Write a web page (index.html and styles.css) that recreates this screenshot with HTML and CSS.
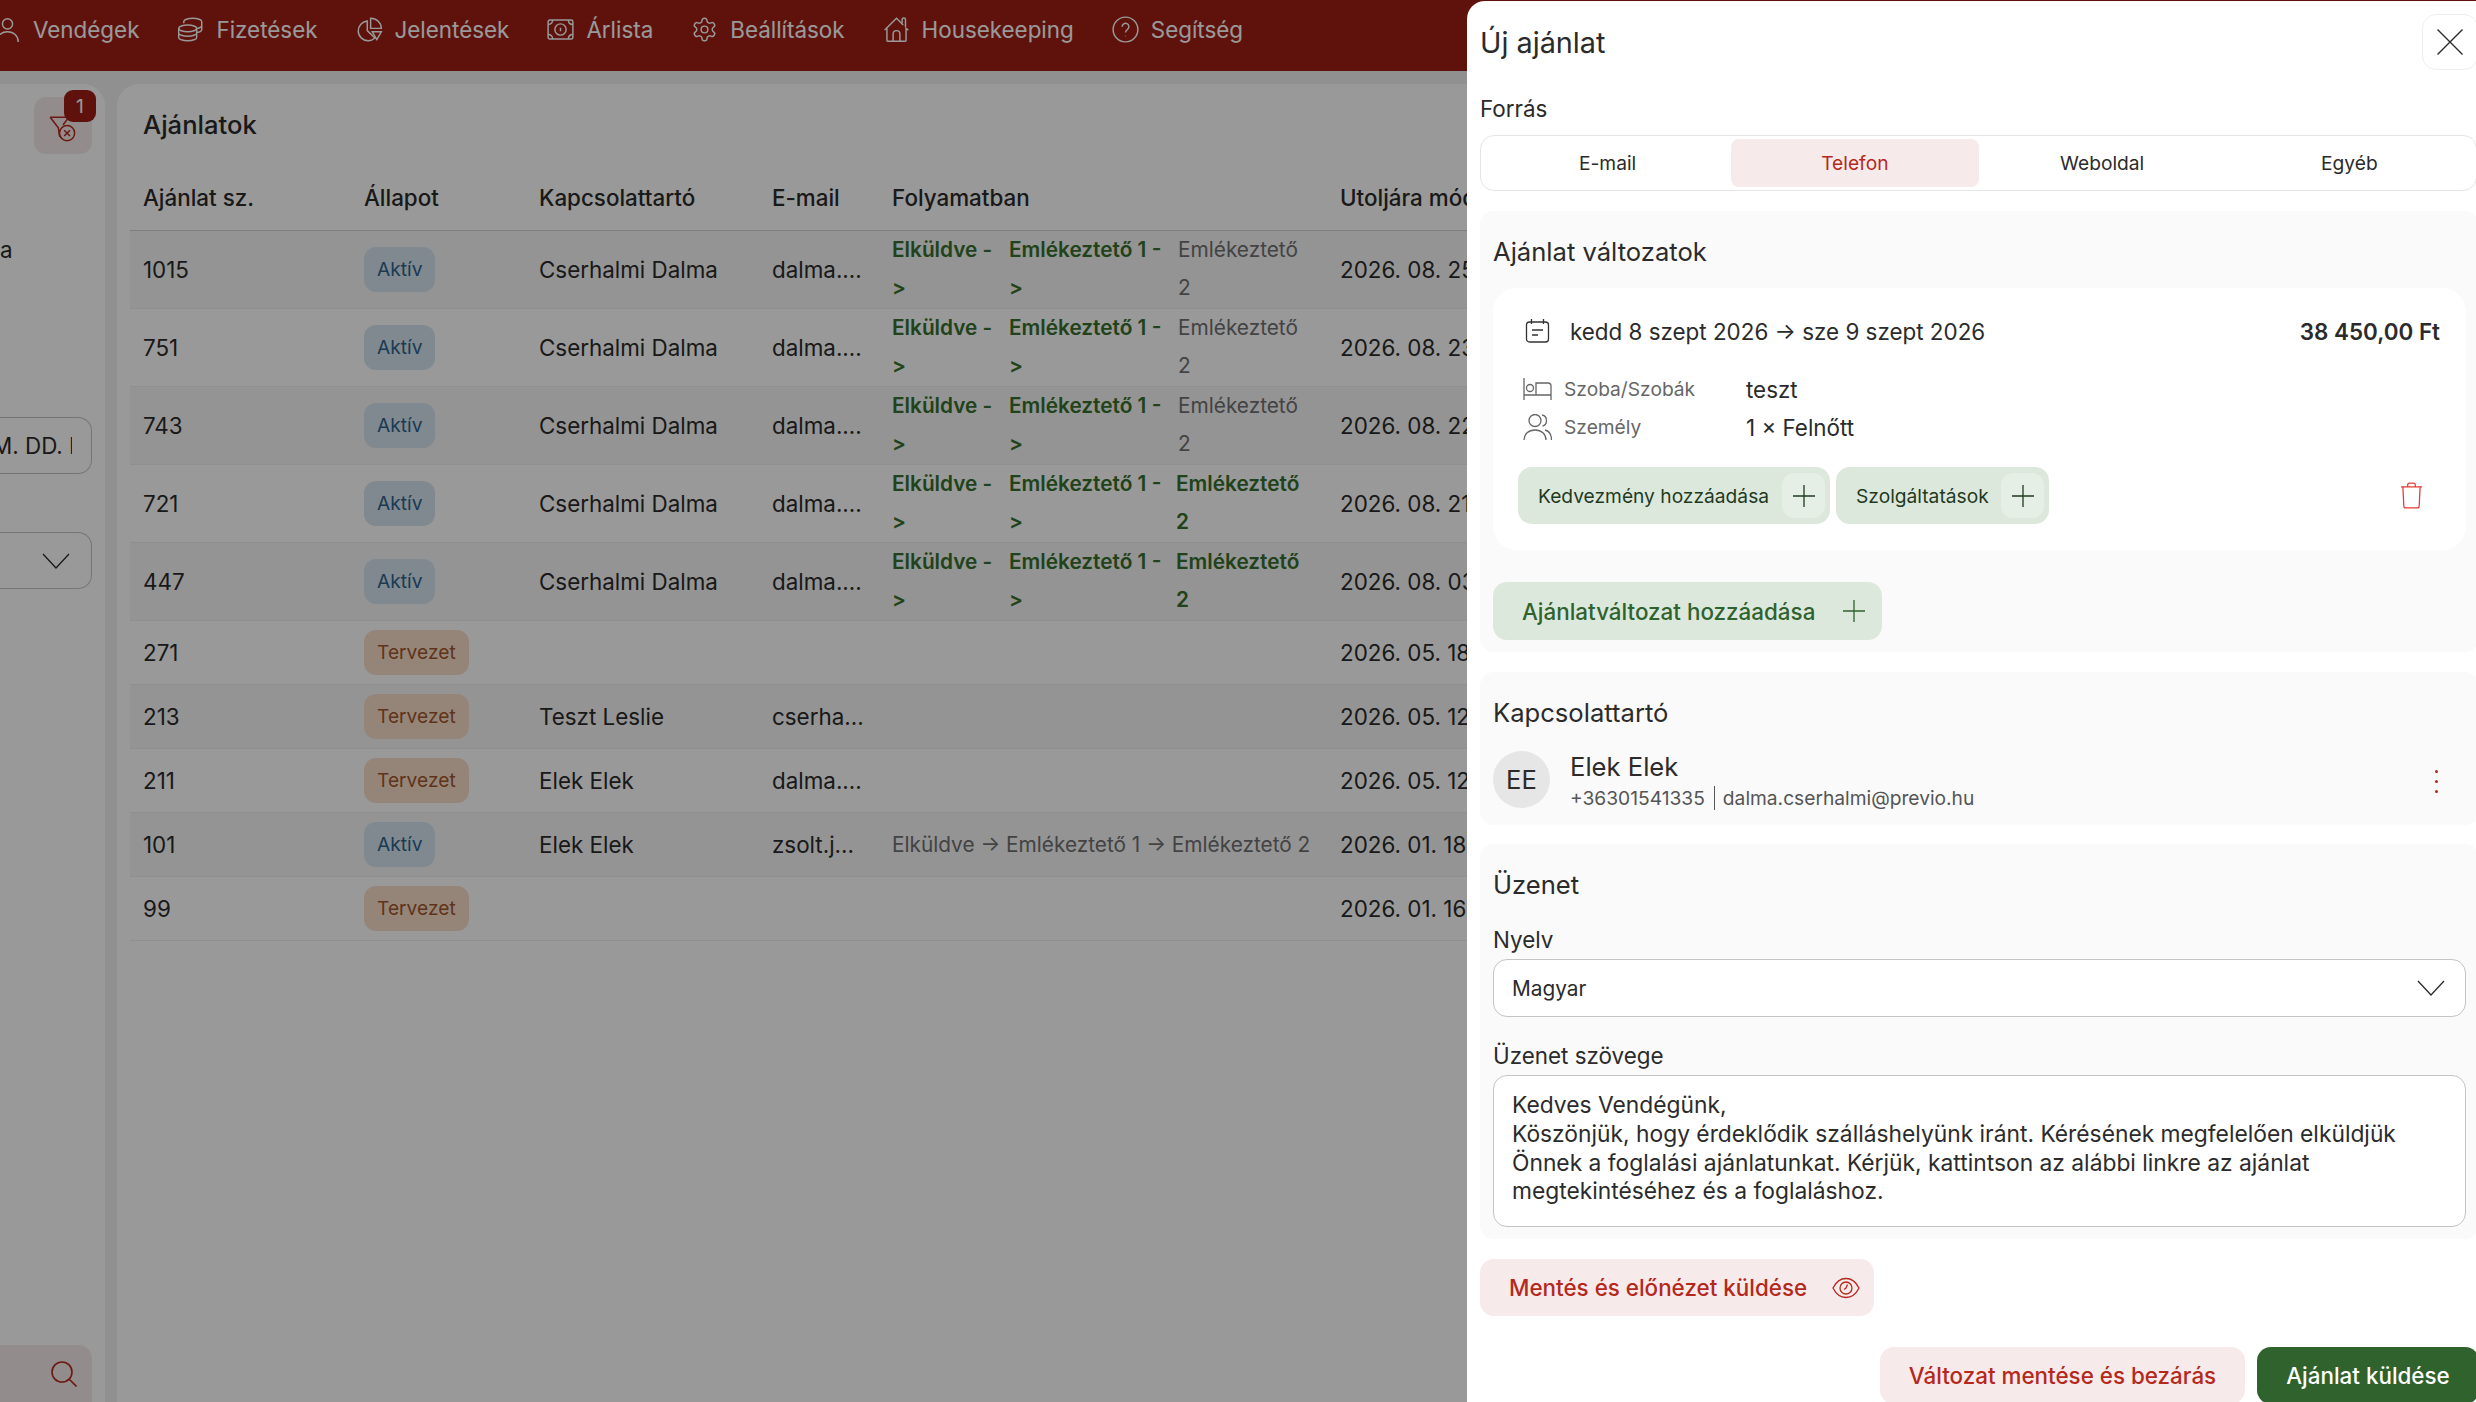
FILE: index.html
```html
<!DOCTYPE html>
<html lang="hu">
<head>
    <meta charset="UTF-8">
    <meta name="viewport" content="width=device-width, initial-scale=1.0">
    <title>Új ajánlat</title>
    <link rel="stylesheet" href="styles.css">
</head>
<body>
    <div class="app">
        <header class="topbar">
            <a class="nav-item">
                <svg class="nav-icon" viewBox="0 0 24 24"><circle cx="12" cy="7" r="4.5"/><path d="M2.5 23c0-5.5 4-9 9.500-9s9.500 3.500 9.500 9"/></svg>
                Vendégek
            </a>
            <a class="nav-item">
                <svg class="nav-icon" viewBox="0 0 24 24"><ellipse cx="9.500" cy="11" rx="8" ry="3"/><path d="M1.500 11v8c0 1.700 3.600 3 8 3s8-1.300 8-3v-8M1.500 15c0 1.700 3.600 3 8 3s8-1.300 8-3M6 6.500V5c0-1.700 3.600-3 8-3s8 1.300 8 3v7c0 1.300-1.800 2.300-4.500 2.700M22 8.500c0 1-1.800 2.200-4.500 2.700"/></svg>
                Fizetések
            </a>
            <a class="nav-item">
                <svg class="nav-icon" viewBox="0 0 24 24"><path d="M10 4.500C5.500 5 2 8.800 2 13.300 2 18.100 6 22 10.800 22c2.300 0 4.400-.9 6-2.400L10 13z"/><path d="M13 2v9h9.500C22.500 6 18.300 2 13 2zM14.500 14h8l-4 7z"/></svg>
                Jelentések
            </a>
            <a class="nav-item">
                <svg class="nav-icon" viewBox="0 0 24 24"><rect x="1" y="3.500" width="22" height="17" rx="1.500"/><circle cx="12" cy="12" r="5"/><path d="M12 10.500v3M1 7.500c2.500 0 4-1.500 4-4M23 7.500c-2.500 0-4-1.500-4-4M1 16.500c2.500 0 4 1.500 4 4M23 16.500c-2.500 0-4 1.500-4 4"/></svg>
                Árlista
            </a>
            <a class="nav-item">
                <svg class="nav-icon" viewBox="0 0 24 24"><path d="M12.220 2h-.440a2 2 0 0 0-2 2v.180a2 2 0 0 1-1 1.730l-.430.250a2 2 0 0 1-2 0l-.150-.080a2 2 0 0 0-2.730.730l-.220.380a2 2 0 0 0 .730 2.730l.150.100a2 2 0 0 1 1 1.720v.510a2 2 0 0 1-1 1.740l-.150.090a2 2 0 0 0-.730 2.730l.220.380a2 2 0 0 0 2.730.730l.150-.080a2 2 0 0 1 2 0l.430.250a2 2 0 0 1 1 1.730V20a2 2 0 0 0 2 2h.440a2 2 0 0 0 2-2v-.180a2 2 0 0 1 1-1.730l.430-.250a2 2 0 0 1 2 0l.150.080a2 2 0 0 0 2.730-.730l.220-.390a2 2 0 0 0-.730-2.730l-.150-.080a2 2 0 0 1-1-1.740v-.500a2 2 0 0 1 1-1.740l.150-.090a2 2 0 0 0 .730-2.730l-.220-.380a2 2 0 0 0-2.730-.730l-.150.080a2 2 0 0 1-2 0l-.430-.250a2 2 0 0 1-1-1.730V4a2 2 0 0 0-2-2z"/><circle cx="12" cy="12" r="3"/></svg>
                Beállítások
            </a>
            <a class="nav-item">
                <svg class="nav-icon" viewBox="0 0 24 24"><path d="M1.500 12.500 12 2l6 6M3.500 11v10.500a1 1 0 0 0 1 1h15a1 1 0 0 0 1-1V11l2 1.500M9 22.500V16a3 3 0 0 1 6 0v6.500"/><path d="M17 6.500V3.200a1.300 1.300 0 0 1 3 0V10"/></svg>
                Housekeeping
            </a>
            <a class="nav-item">
                <svg class="nav-icon" viewBox="0 0 24 24"><circle cx="12" cy="12" r="11"/><path d="M9 9.500a3 3 0 1 1 4.800 2.400c-1 .8-1.800 1.400-1.800 2.800M12 17.500v.500"/></svg>
                Segítség
            </a>
        </header>

        <div class="workspace">
            <aside class="sidebar">
                <button class="icon-btn filter-btn">
                    <svg class="filter-icon" viewBox="0 0 24 24"><path d="M1 2h16l-5 6.500M1 2l7 9 1 7 2 2"/><circle cx="15.500" cy="15.500" r="6.500"/><path d="m13 13 5 5M18 13l-5 5"/></svg>
                    <span class="filter-count">1</span>
                </button>
                <span class="side-label">a</span>
                <div class="side-input"><span class="side-date">M. DD. HH:mm</span></div>
                <div class="side-input side-select">
                    <svg class="chevron" viewBox="0 0 28 16"><path d="M1 1l13 14L27 1"/></svg>
                </div>
                <button class="icon-btn search-btn">
                    <svg class="search-icon" viewBox="0 0 26 26"><circle cx="11" cy="11" r="10"/><path d="m18 18 7.500 7.500"/></svg>
                </button>
            </aside>

            <main class="main">
                <h1 class="main-title">Ajánlatok</h1>
                <table class="offers">
                    <thead>
                        <tr>
                            <th class="col-num">Ajánlat sz.</th>
                            <th class="col-state">Állapot</th>
                            <th class="col-contact">Kapcsolattartó</th>
                            <th class="col-mail">E-mail</th>
                            <th class="col-flow">Folyamatban</th>
                            <th class="col-date">Utoljára módosítva</th>
                        </tr>
                    </thead>
                    <tbody>
                        <tr>
                            <td>1015</td>
                            <td><span class="badge badge-active">Aktív</span></td>
                            <td>Cserhalmi Dalma</td>
                            <td>dalma....</td>
                            <td class="cell-flow"><div class="steps"><span class="step-done">Elküldve -&gt;</span><span class="step-done">Emlékeztető 1 -&gt;</span><span class="step-todo">Emlékeztető 2</span></div></td>
                            <td>2026. 08. 25.</td>
                        </tr>
                        <tr>
                            <td>751</td>
                            <td><span class="badge badge-active">Aktív</span></td>
                            <td>Cserhalmi Dalma</td>
                            <td>dalma....</td>
                            <td class="cell-flow"><div class="steps"><span class="step-done">Elküldve -&gt;</span><span class="step-done">Emlékeztető 1 -&gt;</span><span class="step-todo">Emlékeztető 2</span></div></td>
                            <td>2026. 08. 23.</td>
                        </tr>
                        <tr>
                            <td>743</td>
                            <td><span class="badge badge-active">Aktív</span></td>
                            <td>Cserhalmi Dalma</td>
                            <td>dalma....</td>
                            <td class="cell-flow"><div class="steps"><span class="step-done">Elküldve -&gt;</span><span class="step-done">Emlékeztető 1 -&gt;</span><span class="step-todo">Emlékeztető 2</span></div></td>
                            <td>2026. 08. 22.</td>
                        </tr>
                        <tr>
                            <td>721</td>
                            <td><span class="badge badge-active">Aktív</span></td>
                            <td>Cserhalmi Dalma</td>
                            <td>dalma....</td>
                            <td class="cell-flow"><div class="steps steps-all"><span class="step-done">Elküldve -&gt;</span><span class="step-done">Emlékeztető 1 -&gt;</span><span class="step-done">Emlékeztető 2</span></div></td>
                            <td>2026. 08. 21.</td>
                        </tr>
                        <tr>
                            <td>447</td>
                            <td><span class="badge badge-active">Aktív</span></td>
                            <td>Cserhalmi Dalma</td>
                            <td>dalma....</td>
                            <td class="cell-flow"><div class="steps steps-all"><span class="step-done">Elküldve -&gt;</span><span class="step-done">Emlékeztető 1 -&gt;</span><span class="step-done">Emlékeztető 2</span></div></td>
                            <td>2026. 08. 03.</td>
                        </tr>
                        <tr>
                            <td>271</td>
                            <td><span class="badge badge-draft">Tervezet</span></td>
                            <td></td>
                            <td></td>
                            <td></td>
                            <td>2026. 05. 18.</td>
                        </tr>
                        <tr>
                            <td>213</td>
                            <td><span class="badge badge-draft">Tervezet</span></td>
                            <td>Teszt Leslie</td>
                            <td>cserha...</td>
                            <td></td>
                            <td>2026. 05. 12.</td>
                        </tr>
                        <tr>
                            <td>211</td>
                            <td><span class="badge badge-draft">Tervezet</span></td>
                            <td>Elek Elek</td>
                            <td>dalma....</td>
                            <td></td>
                            <td>2026. 05. 12.</td>
                        </tr>
                        <tr>
                            <td>101</td>
                            <td><span class="badge badge-active">Aktív</span></td>
                            <td>Elek Elek</td>
                            <td>zsolt.j...</td>
                            <td class="step-line">Elküldve -&gt; Emlékeztető 1 -&gt; Emlékeztető 2</td>
                            <td>2026. 01. 18.</td>
                        </tr>
                        <tr>
                            <td>99</td>
                            <td><span class="badge badge-draft">Tervezet</span></td>
                            <td></td>
                            <td></td>
                            <td></td>
                            <td>2026. 01. 16.</td>
                        </tr>
                    </tbody>
                </table>
            </main>
        </div>
    </div>

    <div class="overlay"></div>

    <section class="drawer">
        <div class="drawer-head">
            <h2 class="drawer-title">Új ajánlat</h2>
            <button class="close-btn">
                <svg class="close-icon" viewBox="0 0 26 26"><path d="m.5.500 25 25M25.500.500l-25 25"/></svg>
            </button>
        </div>

        <div class="field-label source-label">Forrás</div>
        <div class="tabs">
            <div class="tab">E-mail</div>
            <div class="tab tab-active">Telefon</div>
            <div class="tab">Weboldal</div>
            <div class="tab">Egyéb</div>
        </div>

        <div class="panel">
            <h3 class="panel-title">Ajánlat változatok</h3>
            <div class="variant">
                <div class="variant-top">
                    <svg class="cal-icon" viewBox="0 0 25 24"><rect x="1.500" y="3" width="22" height="20" rx="3"/><path d="M6.500 0v5M18.500 0v5M7 11h11M7 16h6"/></svg>
                    <span class="variant-dates">kedd 8 szept 2026 -&gt; sze 9 szept 2026</span>
                    <span class="variant-price">38 450,00 Ft</span>
                </div>
                <div class="info-row info-first">
                    <svg class="info-icon" viewBox="0 0 29 24"><path d="M1 1v22M1 18h27v5M28 18V9a3 3 0 0 0-3-3H13v12"/><circle cx="7" cy="11" r="3.500"/></svg>
                    <span class="info-label">Szoba/Szobák</span>
                    <span class="info-value">teszt</span>
                </div>
                <div class="info-row">
                    <svg class="info-icon" viewBox="0 0 29 26"><circle cx="12" cy="6.500" r="6"/><path d="M1 26c0-6 4.500-10 11-10s11 4 11 10M19 1c3 .5 4.500 2.800 4.500 5.500S22 11.500 19.500 12M22 16c4 1 6.500 4.500 6.500 10"/></svg>
                    <span class="info-label">Személy</span>
                    <span class="info-value">1 × Felnőtt</span>
                </div>
                <div class="variant-actions">
                    <button class="chip chip-discount">Kedvezmény hozzáadása<span class="chip-plus"><svg class="plus-icon" viewBox="0 0 22 22"><path d="M11 0v22M0 11h22"/></svg></span></button>
                    <button class="chip chip-service">Szolgáltatások<span class="chip-plus"><svg class="plus-icon" viewBox="0 0 22 22"><path d="M11 0v22M0 11h22"/></svg></span></button>
                    <svg class="trash-icon" viewBox="0 0 24 28"><path d="M1 5h22M3 5l1 20a2 2 0 0 0 2 2h12a2 2 0 0 0 2-2l1-20M8 5V3a2 2 0 0 1 2-2h4a2 2 0 0 1 2 2v2"/></svg>
                </div>
            </div>
            <button class="add-variant">Ajánlatváltozat hozzáadása<svg class="plus-icon" viewBox="0 0 22 22"><path d="M11 0v22M0 11h22"/></svg></button>
        </div>

        <div class="panel panel-contact">
            <h3 class="panel-title">Kapcsolattartó</h3>
            <div class="contact">
                <div class="avatar">EE</div>
                <div class="contact-text">
                    <div class="contact-name">Elek Elek</div>
                    <div class="contact-sub"><span>+36301541335</span><span class="contact-mail">dalma.cserhalmi@previo.hu</span></div>
                </div>
                <div class="more-dots"><i></i><i></i><i></i></div>
            </div>
        </div>

        <div class="panel panel-message">
            <h3 class="panel-title">Üzenet</h3>
            <div class="field-label lang-label">Nyelv</div>
            <div class="select-box">
                Magyar
                <svg class="chevron" viewBox="0 0 28 16"><path d="M1 1l13 14L27 1"/></svg>
            </div>
            <div class="field-label text-label">Üzenet szövege</div>
            <div class="text-box">Kedves Vendégünk,<br>Köszönjük, hogy érdeklődik szálláshelyünk iránt. Kérésének megfelelően elküldjük Önnek a foglalási ajánlatunkat. Kérjük, kattintson az alábbi linkre az ajánlat megtekintéséhez és a foglaláshoz.</div>
        </div>

        <button class="btn btn-light btn-preview">Mentés és előnézet küldése
            <svg class="eye-icon" viewBox="0 0 28 22"><path d="M1 11C4 5 8.500 1.500 14 1.500S24 5 27 11c-3 6-7.500 9.500-13 9.500S4 17 1 11z"/><circle cx="14" cy="11" r="6"/><path d="M15.500 7.500 14 11l-2 1.500"/></svg>
        </button>

        <div class="drawer-foot">
            <button class="btn btn-light btn-save">Változat mentése és bezárás</button>
            <button class="btn btn-send">Ajánlat küldése</button>
        </div>
    </section>
</body>
</html>
```

FILE: styles.css
```css
/* Ajánlatok oldal, fölötte az "Új ajánlat" panel */
html, body {
    margin: 0;
    width: 2476px;
    height: 1402px;
    overflow: hidden;
}

body {
    position: relative;
    font-family: Inter, "Liberation Sans", sans-serif;
    font-size: 22.4px;
    color: #2b2b2b;
    background-color: #f0f0f0;
}

h1, h2, h3 {
    margin: 0;
    font-weight: 500;
}

button {
    font-family: inherit;
    border: none;
    padding: 0;
    cursor: pointer;
}

svg {
    fill: none;
    stroke: currentColor;
    stroke-width: 1.3;
    flex-shrink: 0;
}

/* Felső sáv */
.topbar {
    display: flex;
    align-items: flex-start;
    gap: 38px;
    height: 71px;
    margin-left: -6px;
    padding-top: 15px;
    box-sizing: border-box;
    background-color: #9f1f14;
    color: #fff;
    white-space: nowrap;
}

.nav-item {
    display: flex;
    align-items: center;
    gap: 12px;
    height: 28px;
    font-size: 22.4px;
}

.nav-icon {
    width: 27px;
    height: 27px;
}

/* Lista */
.workspace {
    display: flex;
    gap: 12px;
    height: 1331px;
    padding-top: 13px;
    box-sizing: border-box;
}

.sidebar {
    position: relative;
    display: flex;
    flex-direction: column;
    align-items: flex-end;
    width: 105px;
    padding: 13px 13px 0 0;
    box-sizing: border-box;
    background-color: #fff;
    border-top-right-radius: 22px;
}

.icon-btn {
    display: flex;
    align-items: center;
    justify-content: center;
    width: 58px;
    height: 57px;
    border-radius: 12px;
    background-color: #f6eaea;
    color: #b5281c;
}

.filter-btn {
    position: relative;
}

.filter-icon {
    width: 28px;
    height: 28px;
    margin-top: 6px;
}

.filter-count {
    position: absolute;
    top: -7px;
    right: -4px;
    width: 32px;
    height: 32px;
    border-radius: 9px;
    background-color: #9f1f14;
    color: #fff;
    font-size: 19.2px;
    line-height: 32px;
    text-align: center;
}

.side-label {
    align-self: flex-start;
    margin-top: 82px;
    line-height: 28px;
}

.side-input {
    display: flex;
    align-items: center;
    width: 92px;
    height: 57px;
    margin-top: 153px;
    box-sizing: border-box;
    background-color: #fff;
    border: 1px solid #c4c4c4;
    border-left: none;
    border-radius: 0 14px 14px 0;
}

/* az érték a mező jobb szélén le van vágva */
.side-date {
    width: 72px;
    overflow: hidden;
    white-space: nowrap;
    text-indent: -8px;
}

.side-select {
    justify-content: flex-end;
    margin-top: 58px;
    padding-right: 21px;
}

.chevron {
    width: 28px;
    height: 16px;
}

.search-btn {
    width: 92px;
    margin-top: auto;
    margin-bottom: 0;
    padding: 0 15px 0 0;
    justify-content: flex-end;
    border-radius: 0 14px 0 0;
}

.search-icon {
    width: 26px;
    height: 26px;
    stroke-width: 1.6;
}

.main {
    flex: 0 0 1400px;
    padding-left: 13px;
    box-sizing: border-box;
    background-color: #fff;
    border-top-left-radius: 22px;
}

.main-title {
    height: 82px;
    padding-left: 13px;
    box-sizing: border-box;
    font-size: 25.6px;
    line-height: 82px;
}

.offers {
    width: 1387px;
    table-layout: fixed;
    border-collapse: collapse;
}

.col-num { width: 221px; }
.col-state { width: 175px; }
.col-contact { width: 233px; }
.col-mail { width: 120px; }
.col-flow { width: 448px; }

.offers th {
    height: 64px;
    padding: 0 13px;
    box-sizing: border-box;
    font-weight: 500;
    text-align: left;
    white-space: nowrap;
    border-bottom: 1px solid #d4d4d4;
}

.offers td {
    padding: 9px 13px;
    white-space: nowrap;
    border-bottom: 1px solid #eee;
}

.offers tbody tr:nth-child(odd) {
    background-color: #f7f7f7;
}

.offers td.cell-flow {
    padding: 0 13px;
    white-space: normal;
}

.badge {
    display: inline-block;
    height: 45px;
    padding: 0 13px;
    box-sizing: border-box;
    border-radius: 12px;
    font-size: 19.2px;
    line-height: 45px;
    vertical-align: middle;
}

.badge-active {
    background-color: #d6e5ee;
    color: #2f618c;
}

.badge-draft {
    background-color: #f9deca;
    color: #a0562a;
}

.steps {
    display: grid;
    grid-template-columns: 104px 156px 130px;
    column-gap: 13px;
    font-size: 20.8px;
    line-height: 38.5px;
}

.steps-all {
    grid-template-columns: 104px 154px 130px;
}

.step-done {
    font-weight: 600;
    color: #38702e;
}

.step-todo,
.offers td.step-line {
    color: #707070;
}

.offers td.step-line {
    font-size: 20.8px;
}

.overlay {
    position: absolute;
    inset: 0;
    background-color: rgba(0, 0, 0, 0.4);
}

/* Új ajánlat panel */
.drawer {
    position: absolute;
    top: 1px;
    left: 1467px;
    width: 1026px;
    height: 1403px;
    padding: 0 14px 0 13px;
    box-sizing: border-box;
    background-color: #fff;
    border-top-left-radius: 18px;
}

.drawer-head {
    display: flex;
    align-items: center;
    justify-content: space-between;
    padding-top: 13px;
}

.drawer-title {
    font-size: 28.8px;
    font-weight: 400;
}

.close-btn {
    display: flex;
    align-items: center;
    justify-content: center;
    width: 56px;
    height: 56px;
    margin-right: 1px;
    background-color: #fff;
    border: 1px solid #eee;
    border-radius: 14px;
    color: #2b2b2b;
}

.close-icon {
    width: 26px;
    height: 26px;
    stroke-width: 1.4;
}

.field-label {
    line-height: 28px;
}

.source-label {
    margin-top: 25px;
}

.tabs {
    display: grid;
    grid-template-columns: repeat(4, 1fr);
    width: 997px;
    height: 56px;
    margin-top: 12px;
    padding: 3px;
    box-sizing: border-box;
    border: 1px solid #e5e5e5;
    border-radius: 14px;
}

.tab {
    display: flex;
    align-items: center;
    justify-content: center;
    border-radius: 8px;
    font-size: 19.2px;
}

.tab-active {
    background-color: #f6eaea;
    color: #b5281c;
}

.panel {
    margin-top: 20px;
    padding: 25px 13px 12px;
    background-color: #fafafa;
    border-radius: 14px;
}

.panel-title {
    font-size: 25.6px;
    font-weight: 400;
    line-height: 32px;
}

.variant {
    height: 262px;
    margin-top: 20px;
    padding: 27px 26px 26px 32px;
    box-sizing: border-box;
    background-color: #fff;
    border-radius: 24px;
}

.variant-top {
    display: flex;
    align-items: center;
    height: 32px;
}

.cal-icon {
    width: 25px;
    height: 24px;
    color: #333;
}

.variant-dates {
    margin-left: 20px;
}

.variant-price {
    margin-left: auto;
    font-weight: 600;
}

.info-row {
    display: flex;
    align-items: center;
    height: 36px;
    margin-top: 2px;
    margin-left: -2px;
}

.info-first {
    margin-top: 24px;
}

.info-icon {
    width: 29px;
    height: 26px;
    color: #666;
}

.info-label {
    width: 182px;
    margin-left: 12px;
    font-size: 19.2px;
    color: #666;
}

.variant-actions {
    display: flex;
    align-items: center;
    gap: 6px;
    margin-top: 22px;
    margin-left: -7px;
}

.chip {
    display: flex;
    align-items: center;
    justify-content: space-between;
    height: 57px;
    padding: 0 5px 0 20px;
    box-sizing: border-box;
    border-radius: 14px;
    background-color: #dde8dd;
    color: #1f3a1f;
    font-size: 19.2px;
}

.chip-discount { width: 312px; }
.chip-service { width: 213px; }

.chip-plus {
    display: flex;
    align-items: center;
    justify-content: center;
    width: 43px;
    height: 45px;
    border-radius: 12px;
    background-color: #e6efe6;
}

.plus-icon {
    width: 22px;
    height: 22px;
}

.trash-icon {
    width: 23px;
    height: 27px;
    margin-left: auto;
    margin-right: 17px;
    color: #e53935;
}

.add-variant {
    display: flex;
    align-items: center;
    justify-content: space-between;
    width: 389px;
    height: 58px;
    margin-top: 32px;
    padding: 0 17px 0 29px;
    box-sizing: border-box;
    border-radius: 14px;
    background-color: #dde8dd;
    color: #2f622d;
    font-size: 22.4px;
    font-weight: 500;
}

.panel-contact {
    margin-top: 20px;
}

.contact {
    display: flex;
    align-items: flex-start;
    margin-top: 22px;
}

.avatar {
    display: flex;
    align-items: center;
    justify-content: center;
    width: 57px;
    height: 57px;
    border-radius: 50%;
    background-color: #e6e6e6;
    font-size: 25.6px;
}

.contact-text {
    margin-left: 20px;
}

.contact-name {
    font-size: 25.6px;
    line-height: 32px;
}

.contact-sub {
    display: flex;
    align-items: center;
    height: 30px;
    font-size: 19.2px;
    color: #555;
}

.contact-mail {
    margin-left: 9px;
    padding-left: 8px;
    border-left: 1px solid #555;
}

.more-dots {
    display: flex;
    flex-direction: column;
    gap: 7px;
    margin: 19px 28px 0 auto;
}

.more-dots i {
    display: block;
    width: 3px;
    height: 3px;
    border-radius: 50%;
    background-color: #b5281c;
}

.panel-message {
    margin-top: 19px;
}

.lang-label {
    margin-top: 25px;
}

.select-box {
    display: flex;
    align-items: center;
    justify-content: space-between;
    height: 58px;
    margin-top: 5px;
    padding: 0 20px 0 18px;
    box-sizing: border-box;
    background-color: #fff;
    border: 1px solid #c4c4c4;
    border-radius: 14px;
    font-size: 20.8px;
}

.text-label {
    margin-top: 25px;
}

.text-box {
    height: 152px;
    margin-top: 5px;
    padding: 15px 18px;
    box-sizing: border-box;
    background-color: #fff;
    border: 1px solid #c4c4c4;
    border-radius: 14px;
    font-size: 22.8px;
    line-height: 28.8px;
}

.btn {
    height: 57px;
    box-sizing: border-box;
    border-radius: 14px;
    font-size: 22.4px;
    font-weight: 500;
}

.btn-light {
    background-color: #f6eaea;
    color: #b5281c;
}

.btn-preview {
    display: flex;
    align-items: center;
    justify-content: space-between;
    width: 394px;
    margin-top: 20px;
    padding: 0 14px 0 29px;
}

.eye-icon {
    width: 28px;
    height: 22px;
}

.drawer-foot {
    display: flex;
    justify-content: flex-end;
    gap: 12px;
    margin-top: 31px;
}

.btn-save {
    width: 365px;
}

.btn-send {
    width: 222px;
    background-color: #2f622d;
    color: #fff;
}
```
